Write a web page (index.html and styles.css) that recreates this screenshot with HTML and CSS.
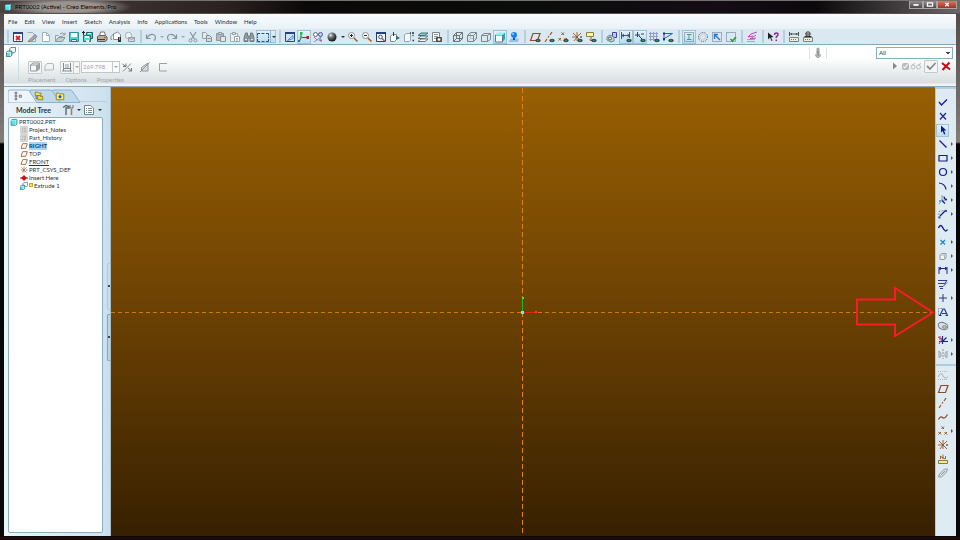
FILE: index.html
```html
<!DOCTYPE html>
<html lang="en">
<head>
<meta charset="utf-8">
<title>PRT0002 (Active) - Creo Elements/Pro</title>
<link rel="stylesheet" href="styles.css">
</head>
<body>
<svg class="defs" aria-hidden="true">
  <defs>
    <radialGradient id="ball" cx=".35" cy=".3" r=".7"><stop offset="0" stop-color="#e8ecee"/><stop offset=".4" stop-color="#6c7276"/><stop offset="1" stop-color="#15181a"/></radialGradient>
  </defs>
  <g>
    <symbol id="eye" viewBox="0 0 12 12"><ellipse cx="9" cy="9.5" rx="2.700" ry="1.700" fill="#3d4245"/><circle cx="9" cy="9.5" r="1" fill="#1f9a86"/></symbol>
    <symbol id="part" viewBox="0 0 12 12"><path d="M1.500 4l2-2h7v7l-2 2h-7z" fill="#5fe0e4" stroke="#1d6f78"/><path d="M8.500 4v7M1.500 4h7l2-2" stroke="#b9ffff" fill="none"/></symbol>
    <symbol id="cube" viewBox="0 0 12 12"><path d="M1.500 4.500h6v6h-6zM4 2.500h6.500v6M1.500 4.500l2.500-2M7.500 4.500l3-2M7.500 10.500l3-2" fill="none" stroke="#7d878d"/></symbol>
    <symbol id="wire" viewBox="0 0 12 12"><path d="M1.500 4.500h6v6h-6zM4.500 1.500h6v6h-6zM1.500 4.500l3-3M7.500 4.500l3-3M7.500 10.500l3-3M1.500 10.500l3-3" fill="none" stroke="#6a747a"/></symbol>
    <symbol id="hidden" viewBox="0 0 12 12"><path d="M4.500 1.500v6h6M1.500 10.500l3-3" fill="none" stroke="#bcc4c8"/><path d="M1.500 4.500h6v6h-6zM4.500 1.500h6v6M1.500 4.500l3-3M7.500 4.500l3-3M7.500 10.500l3-3" fill="none" stroke="#7d878d"/></symbol>
    <symbol id="shaded" viewBox="0 0 12 12"><path d="M8.500 4l2.500-2.500v6.500l-2.500 3z" fill="#23a9b3"/><path d="M1.500 4h7v7h-7z" fill="#f4ffff" stroke="#5b7f88"/><path d="M1.500 4L4 1.500h7L8.500 4z" fill="#8beff2"/></symbol>
    <symbol id="closewin" viewBox="0 0 12 12"><path d="M1.500 1.500h9v9h-9z" fill="#fff" stroke="#2c437c"/><path d="M1 1h10v2H1z" fill="#2c437c"/><path d="M4 5l4 4M8 5l-4 4" stroke="#d2262b" stroke-width="1.800"/></symbol>
    <symbol id="editpage" viewBox="0 0 12 12"><path d="M1.500 1.500h5l3 3v6h-4" fill="#e2e7ea" stroke="#a0aab0"/><path d="M2 10.500l7-7 2 2-6 5z" fill="#a5adb2" stroke="#77828a"/></symbol>
    <symbol id="page" viewBox="0 0 12 12"><path d="M2.500 1.500h4l3 3v6h-7z" fill="#fff" stroke="#a3afb6"/><path d="M6.500 1.500v3h3" fill="none" stroke="#a3afb6"/></symbol>
    <symbol id="open" viewBox="0 0 12 12"><path d="M1.500 10.500v-6h3l1 1h3v2" fill="#e8edf0" stroke="#93a0a7"/><path d="M1.500 10.500l2.500-4h7l-2.500 4z" fill="#c4ccd0" stroke="#8c989e"/><path d="M6 3q3-2.500 4.500.5M11 1.500v2.500H8.500" fill="none" stroke="#8c989e"/></symbol>
    <symbol id="save" viewBox="0 0 12 12"><path d="M1.500 1.500h9v9h-9z" fill="#4fd6d5" stroke="#2f8f98"/><path d="M3 2h6v4H3z" fill="#f4ffff"/><path d="M3.500 8.500h5v2h-5z" fill="#e6f0f2" stroke="#567"/></symbol>
    <symbol id="copysave" viewBox="0 0 12 12"><path d="M4.500 1.500h6v6h-6z" fill="#42cfd0" stroke="#245c66"/><path d="M1.500 4.500h7v6h-7z" fill="#54dddb" stroke="#3d6670"/><path d="M3 5h4v2H3zM4 9h3v2H4zM6 2h3v1H6z" fill="#fff"/><path d="M0 1.500h3M1.500 0v4" stroke="#222"/></symbol>
    <symbol id="print" viewBox="0 0 12 12"><path d="M3.500 5l1-4h4l1 4" fill="#fff" stroke="#7c7168"/><path d="M1.500 5.500l2-1h6l1.500 1.500v3l-2 1.500H1.500z" fill="#bcae9c" stroke="#675d54"/><path d="M2 8.500h7" stroke="#413a35"/><path d="M8 6.500h1.500" stroke="#c43"/></symbol>
    <symbol id="preview" viewBox="0 0 12 12"><path d="M2 8.500H1v-3l3-3 4-.5 2 2" fill="#f2eee8" stroke="#8a8f93"/><path d="M3.500 3l4-2 3 2.500v5h-7z" fill="#fff" stroke="#8a8a88"/><path d="M8 6h3v5H8z" fill="#333"/><path d="M9 6h1v3H9z" fill="#d77c28"/></symbol>
    <symbol id="mail" viewBox="0 0 12 12"><circle cx="4.500" cy="4.500" r="3.200" fill="#eef2f4" stroke="#a4adb3"/><path d="M4.500 6.500h6v4h-6zM4.500 6.500l3 2 3-2" fill="#d2d8dc" stroke="#929da4"/></symbol>
    <symbol id="undo" viewBox="0 0 12 12"><path d="M1.500 3.500v4h4M2 7q2.500-4.500 6-3.500t2 5l-1 1" fill="none" stroke="#8793a0" stroke-width="1.200"/></symbol>
    <symbol id="redo" viewBox="0 0 12 12"><path d="M10.500 3.500v4h-4M10 7q-2.500-4.500-6-3.500t-2 5l1 1" fill="none" stroke="#8793a0" stroke-width="1.200"/></symbol>
    <symbol id="cut" viewBox="0 0 12 12"><path d="M3 1l4.500 7M9 1L4.500 8" stroke="#8a969d" stroke-width="1.200"/><circle cx="3.500" cy="9.500" r="1.500" fill="none" stroke="#8a969d"/><circle cx="8.500" cy="9.500" r="1.500" fill="none" stroke="#8a969d"/></symbol>
    <symbol id="copy" viewBox="0 0 12 12"><path d="M1.500 1.500h3l2 2v4h-5z" fill="#e6eaec" stroke="#96a0a7"/><path d="M5.500 4.500h3l2 2v4h-5z" fill="#d5dade" stroke="#838e95"/><path d="M6.500 7.500h3" stroke="#838e95"/></symbol>
    <symbol id="paste" viewBox="0 0 12 12"><path d="M1.500 2.500h7v7h-7z" fill="#b2babf" stroke="#8d979d"/><path d="M3.500 1.500h3v2h-3z" fill="#dfe3e5" stroke="#8d979d"/><path d="M5.500 5.500h5v5h-5z" fill="#e1e6e9" stroke="#87929a"/></symbol>
    <symbol id="pastesp" viewBox="0 0 12 12"><path d="M1.500 2.500h7v8h-7z" fill="#edf0f2" stroke="#a3adb4"/><path d="M3.500 1.500h3v2h-3z" fill="#dfe3e5" stroke="#98a2a9"/><path d="M5.500 5.500h5v5h-5zM7 7.500h2M7 9h2" fill="#fff" stroke="#98a2a9"/></symbol>
    <symbol id="find" viewBox="0 0 12 12"><path d="M2.500 2h2v3h3V2h2l1.500 5v3.500H7V7H5v3.500H1V7z" fill="#8f9ba2" stroke="#6f7a81"/><path d="M2 8.500h2M8 8.500h2" stroke="#dfe5e9"/></symbol>
    <symbol id="marquee" viewBox="0 0 12 12"><path d="M.5 4.500v-2H3M9 2.500h2.500v2M11.500 8v2.500H9M3 10.500H.5V8M4.500 2.500h3M4.500 10.500h3M.5 5.500v1.500M11.500 5.500v1.500" fill="none" stroke="#344d68"/></symbol>
    <symbol id="repaint" viewBox="0 0 12 12"><path d="M1.500 1.500h9v9h-9z" fill="#cfe4f5" stroke="#25467c"/><path d="M1 1h10v2H1z" fill="#25467c"/><path d="M3.500 9.500l5.500-5v3z" fill="#fff" stroke="#4b86b8"/></symbol>
    <symbol id="spin" viewBox="0 0 12 12"><path d="M3 2v4.500h6M3 6.500L1.500 10" fill="none" stroke="#4b5358"/><path d="M2 1h2.500v2.500H2z" fill="#1fb84a"/><path d="M8.500 5h2.500v3H8.500z" fill="#b5231f"/><circle cx="3" cy="6.500" r="1.300" fill="#35b74a"/><path d="M0 9h2v2H0z" fill="#2866d8"/></symbol>
    <symbol id="orient" viewBox="0 0 12 12"><circle cx="3.500" cy="3.500" r="2" fill="#fff" stroke="#666"/><circle cx="8.500" cy="3.500" r="2" fill="#c5cdf4" stroke="#4a5aa0"/><path d="M2 6l3 3 4-3M5 9l-3 2M9 6l-2 4" fill="none" stroke="#7b8ac2"/><path d="M8 8.500h2v2H8z" fill="#aa63a5"/></symbol>
    <symbol id="sphere" viewBox="0 0 12 12"><circle cx="6" cy="6" r="4.500" fill="url(#ball)"/></symbol>
    <symbol id="zoomin" viewBox="0 0 12 12"><circle cx="4.500" cy="4.500" r="3" fill="#fff" stroke="#8a9093"/><path d="M3 4.500h3M4.500 3v3" stroke="#222"/><path d="M7 7l3.500 3.500" stroke="#985b32" stroke-width="1.500"/></symbol>
    <symbol id="zoomout" viewBox="0 0 12 12"><circle cx="4.500" cy="4.500" r="3" fill="#fff" stroke="#8a9093"/><path d="M3 4.500h3" stroke="#333"/><path d="M7 7l3.500 3.500" stroke="#985b32" stroke-width="1.500"/></symbol>
    <symbol id="refit" viewBox="0 0 12 12"><path d="M1.500 1.500h9v9h-9z" fill="#e9f4fb" stroke="#263f7c"/><path d="M1 1h10v2H1z" fill="#263f7c"/><circle cx="5.500" cy="6" r="1.800" fill="#fff" stroke="#555"/><path d="M7 7.500l2.500 2.500" stroke="#985b32" stroke-width="1.300"/></symbol>
    <symbol id="reorient" viewBox="0 0 12 12"><path d="M1.500 5l2-1.500h4v5l-2 2h-4z" fill="#f4ffff" stroke="#7c8a90"/><path d="M7 4.500l4 2.500-4 2z" fill="#2b7073"/><path d="M4.500 1v4" stroke="#2b3a3c"/></symbol>
    <symbol id="views" viewBox="0 0 12 12"><path d="M1.500 4l1.500-1.500h4.500v6.500l-1 1.500h-5z" fill="#f6fbfd" stroke="#98a5ab"/><path d="M7 2h1M9 2h2M9.500 4.500h1M9.500 9.500h1.500" stroke="#1d3337" stroke-width="1.500"/></symbol>
    <symbol id="layers" viewBox="0 0 12 12"><path d="M1 10.500L4 8h7l-3 2.500z" fill="#fff" stroke="#65757b"/><path d="M1 7.500L4 5h7L8 7.500z" fill="#dff2ef" stroke="#65757b"/><path d="M1 4.500L4 2h7L8 4.500z" fill="#74d3cc" stroke="#4e7377"/></symbol>
    <symbol id="viewmgr" viewBox="0 0 12 12"><path d="M1.500 1.500h7v9h-7z" fill="#fff" stroke="#7c8589"/><path d="M3 3.500h4M3 5.500h4M3 7.500h2" stroke="#8a9397"/><path d="M5.500 6.500h5v4h-5z" fill="#706a60" stroke="#4d4943"/><circle cx="8" cy="8.500" r="1.200" fill="#fff"/></symbol>
    <symbol id="enh" viewBox="0 0 12 12"><path d="M1 10l2-2.500h8L10 11H1z" fill="#8ac4ee"/><circle cx="6" cy="4" r="3" fill="#1780ef"/><circle cx="5" cy="3" r="1" fill="#9fd0ff"/><path d="M5 7h2v2H5z" fill="#1455a5"/></symbol>
    <symbol id="plane" viewBox="0 0 12 12"><path d="M1.500 9.500L4 2.500h7L8.500 9.500z" fill="none" stroke="#8a4c22" stroke-width="1.200"/></symbol>
    <symbol id="axis" viewBox="0 0 12 12"><path d="M2 11l2-3M5 6.500l1-1.500M7 4l2-3" stroke="#9b531f" stroke-width="1.200"/></symbol>
    <symbol id="points" viewBox="0 0 12 12"><path d="M4.500 1.500L7 4M7 1.500L4.500 4M1.500 7L4 9.500M4 7L1.500 9.500M7.500 7L10 9.500M10 7L7.500 9.500" stroke="#9b531f"/></symbol>
    <symbol id="csys" viewBox="0 0 12 12"><path d="M6 6L2 2M6 6l4-4M6 6H1M6 6l-3 4M6 1v9M6 6l4 4" stroke="#985222" stroke-width=".9"/><path d="M9 6h2" stroke="#222"/></symbol>
    <symbol id="note" viewBox="0 0 12 12"><path d="M1.500 1.500h7v4h-7z" fill="#fff6a0" stroke="#888044"/><path d="M6 6v4M4.500 8.500L6 10l1.500-1.500" fill="none" stroke="#8a5a3a"/></symbol>
    <symbol id="setup" viewBox="0 0 12 12"><path d="M6.500 1.500h4v5h-4z" fill="#c4c9f8" stroke="#3f43a8"/><path d="M1 6l3-2 4 2v4l-3 1-4-2z" fill="#b8dedb" stroke="#768589"/><circle cx="4" cy="7.500" r="1.500" fill="#eee" stroke="#555"/></symbol>
    <symbol id="dim" viewBox="0 0 12 12"><path d="M1.500 1v7M9.500 1v6M2 4.500h7M4 3L2 4.500 4 6M7.500 3l2 1.500-2 1.500" fill="none" stroke="#3a4468" stroke-width=".9"/></symbol>
    <symbol id="constr" viewBox="0 0 12 12"><path d="M3.500 1v5M1 4h5M5 5l4 4" stroke="#1e3aa4"/><path d="M7 3h3" stroke="#444"/></symbol>
    <symbol id="grid" viewBox="0 0 12 12"><path d="M2.500 1v9M5.500 1v9M8.500 1v9M1 2.500h9M1 5.500h9M1 8.500h9" stroke="#949ccb"/></symbol>
    <symbol id="vertex" viewBox="0 0 12 12"><path d="M2 10V2.500h8.500L2.500 7.500" fill="none" stroke="#2761bd"/><path d="M1 1.500h2v2H1zM1 7h2v2H1z" fill="#19337b"/></symbol>
    <symbol id="dots" viewBox="0 0 12 12"><path d="M1.500 1.500h9v9h-9z" fill="none" stroke="#5a7187" stroke-dasharray="1 1"/></symbol>
    <symbol id="shadeloop" viewBox="0 0 12 12"><use href="#dots"/><path d="M4 3.500h4.500M6 3.500v5M4 8.500h4.500" stroke="#55977e"/></symbol>
    <symbol id="openends" viewBox="0 0 12 12"><circle cx="6" cy="6" r="4.500" fill="none" stroke="#46565f" stroke-dasharray="1 1"/><path d="M6 2.500L9.500 6 6 9.500 2.500 6z" fill="none" stroke="#c0ccd4"/></symbol>
    <symbol id="overlap" viewBox="0 0 12 12"><use href="#dots"/><path d="M3 3l6 6M3.500 8V3.500H7" fill="none" stroke="#2679da" stroke-width="1.400"/></symbol>
    <symbol id="feature" viewBox="0 0 12 12"><use href="#dots"/><path d="M5.500 8l2 2 3.500-4" fill="none" stroke="#20a23a" stroke-width="1.600"/></symbol>
    <symbol id="resume" viewBox="0 0 12 12"><path d="M1 10.500h8M1 8.500h8" stroke="#a6acb4"/><path d="M11 1L5 3 2 6l5-1M10 4L4 8l6-1" fill="none" stroke="#b44bb8"/></symbol>
    <symbol id="help" viewBox="0 0 12 12"><path d="M1 1.500v7l2-2 1.500 3.500 1-.5-1.500-3 2.500-.5z" fill="#222"/><path d="M7.500 4q0-2 1.800-2t1.700 1.500q0 1.300-1.700 2.300v1.200M9.300 8.500v1.500" fill="none" stroke="#8b2495" stroke-width="1.500"/></symbol>
    <symbol id="ruler" viewBox="0 0 12 12"><path d="M1.500 6.500h9v4h-9z" fill="#f1efdc" stroke="#7b8084"/><path d="M3 8.500h6" stroke="#777" stroke-dasharray="1 1"/><path d="M1.500 1v4M10.500 1v4M2 3h8M4 2L3 3l1 1M8 2l1 1-1 1" fill="none" stroke="#484e52"/></symbol>
    <symbol id="scale" viewBox="0 0 12 12"><path d="M1.500 6.500h9v4h-9z" fill="#f1efdc" stroke="#7b8084"/><path d="M3 8.500h6" stroke="#777" stroke-dasharray="1 1"/><circle cx="6" cy="3" r="2.200" fill="#ddd" stroke="#333"/><path d="M2.500 5.500h7M4 3h4" stroke="#333"/></symbol>
    <symbol id="extrude" viewBox="0 0 12 12"><path d="M4.500 2l1.500-1.500h5.500v5L10 7H4.500z" fill="#eefafa" stroke="#47646c"/><path d="M.5 6.500L2 5h5v5l-1.500 1.500h-5z" fill="#6bdbdc" stroke="#2b6972"/><path d="M1 6.500h4.500V11" fill="none" stroke="#e7ffff"/></symbol>
    <symbol id="solid" viewBox="0 0 12 12"><path d="M1.500 4h6v6h-6zM1.500 4L4 2h6.500v6l-3 2" fill="#f5f6f6" stroke="#92989b"/><path d="M7.500 4l3-2v6l-3 2z" fill="#a0a6a9"/></symbol>
    <symbol id="surface" viewBox="0 0 12 12"><path d="M2 10V5l2-2.500h5q1.500 0 1.500 1.500v5M2 10l1.500-1H10" fill="none" stroke="#b2b7ba"/></symbol>
    <symbol id="depth" viewBox="0 0 12 12"><path d="M1 10h10M2.500 2v8M9.500 2v8M2.500 7.500h7" fill="none" stroke="#858c90"/><path d="M4 3h4v4H4z" fill="#c6cbce"/></symbol>
    <symbol id="flip" viewBox="0 0 12 12"><path d="M2 10.500l8-8" stroke="#858c90"/><path d="M1.500 3l3.500 2.500M5 2.500v3H2M7 7l3.500 3M10.500 7v3h-3" fill="none" stroke="#757c80"/></symbol>
    <symbol id="cutmat" viewBox="0 0 12 12"><path d="M2.500 10V6.500L9 2v8z" fill="#d7dbdd" stroke="#8e9599"/><path d="M1 11L10.500 1.500" stroke="#8e9599"/></symbol>
    <symbol id="thick" viewBox="0 0 12 12"><path d="M10 2.500H2.500v7.500H10" fill="none" stroke="#9aa1a5"/></symbol>
    <symbol id="thermo" viewBox="0 0 12 12"><path d="M5 1.500q1-1 2 0v5q2 1 1 3-2 2-4 0-1-2 1-3z" fill="#c5c9cb" stroke="#8f9598"/><path d="M6 4v5" stroke="#777"/></symbol>
    <symbol id="play" viewBox="0 0 12 12"><path d="M4 2.500L8 6l-4 3.500z" fill="#858b8e"/></symbol>
    <symbol id="glasses" viewBox="0 0 12 12"><circle cx="3" cy="7" r="2" fill="none" stroke="#b9bfc1"/><circle cx="8.500" cy="7" r="2" fill="none" stroke="#b9bfc1"/><path d="M2 5l3-1.500M8 5l3-1.500" stroke="#b9bfc1"/></symbol>
    <symbol id="okgrey" viewBox="0 0 12 12"><path d="M2 6l3 3 5.500-6" fill="none" stroke="#858b8e" stroke-width="1.800"/></symbol>
    <symbol id="redx" viewBox="0 0 12 12"><path d="M2 3l8 6.500M9.500 2.500L2.500 10" stroke="#c80b12" stroke-width="2"/></symbol>
    <symbol id="ok" viewBox="0 0 12 12"><path d="M2 6l2.500 3L10 3.500" fill="none" stroke="#15238f" stroke-width="1.400"/></symbol>
    <symbol id="cancel" viewBox="0 0 12 12"><path d="M3 3l6 6.500M9 3L3 9.500" stroke="#15238f" stroke-width="1.200"/></symbol>
    <symbol id="pointer" viewBox="0 0 12 12"><path d="M4 1.500v7l1.700-1.500L7 10.500l1.300-.6L7 6.500h2.500z" fill="#10188a"/></symbol>
    <symbol id="line" viewBox="0 0 12 12"><path d="M2.500 2.500l7 7" stroke="#151c8b" stroke-width="1.300"/></symbol>
    <symbol id="rect" viewBox="0 0 12 12"><path d="M2 3.500h8v5.500H2z" fill="none" stroke="#151c8b" stroke-width="1.200"/></symbol>
    <symbol id="circle" viewBox="0 0 12 12"><circle cx="6" cy="6" r="3.500" fill="none" stroke="#151c8b" stroke-width="1.200"/></symbol>
    <symbol id="arc" viewBox="0 0 12 12"><path d="M2 3q6 .5 7 6.500" fill="none" stroke="#151c8b" stroke-width="1.200"/></symbol>
    <symbol id="fillet" viewBox="0 0 12 12"><path d="M5 1v5l5 .5M5 6l-3 4" fill="none" stroke="#9097a0"/><path d="M7 2.500q0 3 3 3M5 6.500l3 3" fill="none" stroke="#151c8b" stroke-width="1.200"/><path d="M2 6h2v2H2z" fill="#4bbac1"/></symbol>
    <symbol id="chamfer" viewBox="0 0 12 12"><path d="M2 10V3.500L10 2" fill="none" stroke="#8592a6" stroke-dasharray="2 1"/><path d="M3 8l5-5" stroke="#151c8b" stroke-width="1.200"/><path d="M1.500 8.500h2v2h-2zM8 2h2v2H8z" fill="#2d58bd"/></symbol>
    <symbol id="spline" viewBox="0 0 12 12"><path d="M1.500 6q2-5 4.500 0t4.500 1.500" fill="none" stroke="#151c8b" stroke-width="1.400"/></symbol>
    <symbol id="point" viewBox="0 0 12 12"><path d="M3.500 4l4.500 4.500M8 4L3.500 8.500" stroke="#1583d6" stroke-width="1.200"/></symbol>
    <symbol id="edge" viewBox="0 0 12 12"><path d="M3 5l1.500-1.500H9V8L7.500 9.500H3z" fill="#f2f3f3" stroke="#969ca1"/><path d="M3 5h4.500v4.500M7.500 5L9 3.500" fill="none" stroke="#b0b5b9"/></symbol>
    <symbol id="dimension" viewBox="0 0 12 12"><path d="M2 3v7M10 3v7M2 4.500h8M4 3L2 4.500 4 6M8 3l2 1.500L8 6" fill="none" stroke="#20298b"/></symbol>
    <symbol id="modify" viewBox="0 0 12 12"><path d="M1 2.500h9L7 6M1 5.500h6M2 8.500h4l4-4M3 10.500h3" fill="none" stroke="#303b91"/></symbol>
    <symbol id="cross" viewBox="0 0 12 12"><path d="M2 6h8M6 2v8" stroke="#30367a"/></symbol>
    <symbol id="textA" viewBox="0 0 12 12"><path d="M1.500 9.500v-7h4" fill="none" stroke="#8490a8" stroke-dasharray="2 1"/><path d="M3 9.500L6 3h1.500l3 6.500M5 7.500h4M2 9.500h2.500M8.500 9.500H11" fill="none" stroke="#293987" stroke-width="1.200"/></symbol>
    <symbol id="palette" viewBox="0 0 12 12"><ellipse cx="6" cy="6" rx="5" ry="3.400" transform="rotate(22 6 6)" fill="#dbe0d8" stroke="#67719a"/><ellipse cx="7.500" cy="7" rx="1.900" ry="1.300" fill="#d5d5a8" stroke="#86876f"/></symbol>
    <symbol id="trim" viewBox="0 0 12 12"><path d="M5.500 2v8M2 7.500h9M5.500 7.500l4-4" stroke="#1b2792" stroke-width="1.200"/><path d="M1 3l4 2-3 5M3 2v4" fill="none" stroke="#b43a36"/></symbol>
    <symbol id="mirror" viewBox="0 0 12 12"><path d="M6 1v10" stroke="#87939a" stroke-dasharray="2 1"/><path d="M2 9.500V3l2 2.500v3zM10 9.500V3L8 5.500v3z" fill="#d5dbdf" stroke="#9ba4a9"/></symbol>
    <symbol id="ghost" viewBox="0 0 12 12"><path d="M1 2.500h10M1 10.500h10" stroke="#b0b9be" stroke-dasharray="1 1"/><path d="M1 8q3-6 5-1.500t5 1" fill="none" stroke="#a8b1b7"/></symbol>
    <symbol id="curve" viewBox="0 0 12 12"><path d="M1.500 8.500q2-4 4-2t5-3" fill="none" stroke="#8c4725" stroke-width="1.200"/></symbol>
    <symbol id="analysis" viewBox="0 0 12 12"><path d="M1.500 7.500h9v3h-9z" fill="#fbe98f" stroke="#8b7c38"/><path d="M3.500 6V3M6 6V1.500M8.500 6V3M3 3l5 3" fill="none" stroke="#a1532b" stroke-width=".9"/></symbol>
    <symbol id="link" viewBox="0 0 12 12"><path d="M1.500 10l1-3 5-5h3l-1 3-5 5zM4 8l4-4" fill="#d9dfe2" stroke="#929ba0"/></symbol>
    <symbol id="treeicon" viewBox="0 0 12 12"><path d="M2.500 1.500h2v2h-2zM2.500 5h2v2h-2zM2.500 8.500h2v2h-2zM7.500 5h2.500v2.500H7.500z" fill="#fff" stroke="#555d62"/></symbol>
    <symbol id="folders" viewBox="0 0 12 12"><path d="M1.500 1.500h3l1 1h3v3h-7z" fill="#f6e263" stroke="#807724"/><path d="M4.500 5.500h2l1 1h3v4h-6z" fill="#f3d94c" stroke="#807724"/><path d="M2.500 6v3H4" fill="none" stroke="#555"/></symbol>
    <symbol id="favorite" viewBox="0 0 12 12"><path d="M1.500 2.500h3l1 1h5v7h-9z" fill="#f7e966" stroke="#877c2a"/><path d="M6 4.500l2 2.500-2 2-2-2z" fill="#1c4dbd"/></symbol>
    <symbol id="tools" viewBox="0 0 12 12"><path d="M1 3.500l3-2 3 1v1.500H4v7" fill="none" stroke="#5d686e" stroke-width="1.400"/><path d="M9.500 5v6" stroke="#b27842" stroke-width="1.500"/><path d="M8 1v3h3V1" fill="none" stroke="#647076"/></symbol>
    <symbol id="list" viewBox="0 0 12 12"><path d="M1.500 1.500h6l3 2.500v6.500h-9z" fill="#fff" stroke="#76848b"/><path d="M3 4.500h1M3 6.500h1M3 8.500h1M5 4.500h4M5 6.500h4M5 8.500h4" stroke="#78858b"/></symbol>
    <symbol id="notes" viewBox="0 0 12 12"><path d="M1 1h10v10H1z" fill="#dcdedb" stroke="#b7bbb8"/><path d="M3 3.500h2M6 3.500h3M3 6h2M6 6h3M3 8.500h2M6 8.500h3" stroke="#979c98"/></symbol>
    <symbol id="insert" viewBox="0 0 12 12"><path d="M6 1.500L10.500 6 6 10.500 1.500 6z" fill="#cb1019"/><path d="M0 6h12" stroke="#cb1019" stroke-width="1.500"/></symbol>
  </g>
</svg>

<div class="window">
  <header class="titlebar">
    <svg class="app-icon"><use href="#part"/></svg>
    <h1 class="title">PRT0002 (Active) - Creo Elements/Pro</h1>
    <div class="window-buttons">
      <button class="wb" aria-label="Minimize"><svg viewBox="0 0 14 8"><path d="M4 4.500h6" stroke="#fff" stroke-width="2"/></svg></button>
      <button class="wb" aria-label="Maximize"><svg viewBox="0 0 14 8"><path d="M4 2h6v4H4z" fill="none" stroke="#fff" stroke-width="1.500"/></svg></button>
      <button class="wb wb-close" aria-label="Close"><svg viewBox="0 0 14 8"><path d="M5 2l4 4M9 2L5 6" stroke="#fff" stroke-width="1.500"/></svg></button>
    </div>
  </header>

  <div class="client">
    <nav class="menubar">
      <button>File</button><button>Edit</button><button>View</button><button>Insert</button><button>Sketch</button><button>Analysis</button><button>Info</button><button>Applications</button><button>Tools</button><button>Window</button><button>Help</button>
    </nav>

    <div class="toolbar" role="toolbar" aria-label="Main toolbar">
      <span class="sep"></span>
      <button class="tool" aria-label="Close window"><svg><use href="#closewin"/></svg></button>
      <button class="tool" aria-label="Edit"><svg><use href="#editpage"/></svg></button>
      <button class="tool" aria-label="New"><svg><use href="#page"/></svg></button>
      <button class="tool" aria-label="Open"><svg><use href="#open"/></svg></button>
      <button class="tool" aria-label="Save"><svg><use href="#save"/></svg></button>
      <button class="tool" aria-label="Save a copy"><svg><use href="#copysave"/></svg></button>
      <button class="tool" aria-label="Print"><svg><use href="#print"/></svg></button>
      <button class="tool" aria-label="Send"><svg><use href="#preview"/></svg></button>
      <button class="tool" aria-label="Mail link"><svg><use href="#mail"/></svg></button>
      <span class="sep"></span>
      <button class="tool" aria-label="Undo"><svg><use href="#undo"/></svg></button>
      <button class="drop dim" aria-label="Undo list"></button>
      <button class="tool" aria-label="Redo"><svg><use href="#redo"/></svg></button>
      <button class="drop dim" aria-label="Redo list"></button>
      <button class="tool" aria-label="Cut"><svg><use href="#cut"/></svg></button>
      <button class="tool" aria-label="Copy"><svg><use href="#copy"/></svg></button>
      <button class="tool" aria-label="Paste"><svg><use href="#paste"/></svg></button>
      <button class="tool" aria-label="Paste special"><svg><use href="#pastesp"/></svg></button>
      <button class="tool" aria-label="Find"><svg><use href="#find"/></svg></button>
      <span class="split on">
        <button class="tool" aria-label="Select inside box"><svg><use href="#marquee"/></svg></button>
        <button class="drop" aria-label="Selection modes"></button>
      </span>
      <span class="sep"></span>
      <button class="tool" aria-label="Repaint"><svg><use href="#repaint"/></svg></button>
      <button class="tool on" aria-label="Spin center"><svg><use href="#spin"/></svg></button>
      <button class="tool" aria-label="Orient mode"><svg><use href="#orient"/></svg></button>
      <button class="tool" aria-label="Appearance"><svg><use href="#sphere"/></svg></button>
      <button class="drop" aria-label="Appearances"></button>
      <button class="tool" aria-label="Zoom in"><svg><use href="#zoomin"/></svg></button>
      <button class="tool" aria-label="Zoom out"><svg><use href="#zoomout"/></svg></button>
      <button class="tool" aria-label="Refit"><svg><use href="#refit"/></svg></button>
      <button class="tool" aria-label="Reorient"><svg><use href="#reorient"/></svg></button>
      <button class="tool" aria-label="Saved views"><svg><use href="#views"/></svg></button>
      <button class="tool" aria-label="Layers"><svg><use href="#layers"/></svg></button>
      <button class="tool" aria-label="View manager"><svg><use href="#viewmgr"/></svg></button>
      <span class="sep"></span>
      <button class="tool" aria-label="Wireframe"><svg><use href="#wire"/></svg></button>
      <button class="tool" aria-label="Hidden line"><svg><use href="#hidden"/></svg></button>
      <button class="tool" aria-label="No hidden"><svg><use href="#cube"/></svg></button>
      <button class="tool on" aria-label="Shading"><svg><use href="#shaded"/></svg></button>
      <button class="tool" aria-label="Enhanced realism"><svg><use href="#enh"/></svg></button>
      <span class="sep"></span>
      <button class="tool" aria-label="Plane display"><svg><use href="#plane"/><use href="#eye"/></svg></button>
      <button class="tool" aria-label="Axis display"><svg><use href="#axis"/><use href="#eye"/></svg></button>
      <button class="tool" aria-label="Point display"><svg><use href="#points"/><use href="#eye"/></svg></button>
      <button class="tool" aria-label="Csys display"><svg><use href="#csys"/><use href="#eye"/></svg></button>
      <button class="tool" aria-label="Annotation display"><svg><use href="#note"/><use href="#eye"/></svg></button>
      <span class="sep"></span>
      <button class="tool" aria-label="Sketch orientation"><svg><use href="#setup"/></svg></button>
      <button class="tool on" aria-label="Show dimensions"><svg><use href="#dim"/><use href="#eye"/></svg></button>
      <button class="tool on" aria-label="Show constraints"><svg><use href="#constr"/><use href="#eye"/></svg></button>
      <button class="tool" aria-label="Show grid"><svg><use href="#grid"/><use href="#eye"/></svg></button>
      <button class="tool" aria-label="Show vertices"><svg><use href="#vertex"/><use href="#eye"/></svg></button>
      <span class="sep"></span>
      <button class="tool on" aria-label="Shade closed loops"><svg><use href="#shadeloop"/></svg></button>
      <button class="tool" aria-label="Highlight open ends"><svg><use href="#openends"/></svg></button>
      <button class="tool" aria-label="Overlapping geometry"><svg><use href="#overlap"/></svg></button>
      <button class="tool" aria-label="Feature requirements"><svg><use href="#feature"/></svg></button>
      <span class="sep"></span>
      <button class="tool" aria-label="Datum references"><svg><use href="#resume"/></svg></button>
      <span class="sep"></span>
      <button class="tool" aria-label="Context help"><svg><use href="#help"/></svg></button>
      <span class="sep"></span>
      <button class="tool" aria-label="Measure distance"><svg><use href="#ruler"/></svg></button>
      <button class="tool" aria-label="Mass properties"><svg><use href="#scale"/></svg></button>
    </div>

    <section class="dashboard">
      <div class="feature-icon"><svg><use href="#extrude"/></svg></div>
      <div class="feature">
        <div class="feature-row">
          <div class="group">
            <button class="tool boxed" aria-label="Solid"><svg><use href="#solid"/></svg></button>
            <button class="tool" aria-label="Surface"><svg><use href="#surface"/></svg></button>
          </div>
          <div class="group">
            <span class="split boxed">
              <button class="tool" aria-label="Depth"><svg><use href="#depth"/></svg></button>
              <button class="drop dim" aria-label="Depth options"></button>
            </span>
            <span class="combo">
              <input type="text" value="269.798" aria-label="Depth value">
              <button class="drop dim" aria-label="Recent values"></button>
            </span>
            <button class="tool" aria-label="Flip direction"><svg><use href="#flip"/></svg></button>
          </div>
          <button class="tool" aria-label="Remove material"><svg><use href="#cutmat"/></svg></button>
          <button class="tool" aria-label="Thicken"><svg><use href="#thick"/></svg></button>
        </div>
        <div class="panel-tabs"><button>Placement</button><button>Options</button><button>Properties</button></div>
      </div>
      <div class="status">
        <div class="status-row">
          <span class="thermo"><svg><use href="#thermo"/></svg></span>
          <select class="filter" aria-label="Selection filter"><option>All</option></select>
        </div>
        <div class="confirm-row">
          <button class="tool" aria-label="Resume"><svg><use href="#play"/></svg></button>
          <input class="check" type="checkbox" checked aria-label="Preview">
          <button class="tool" aria-label="Verify"><svg><use href="#glasses"/></svg></button>
          <button class="tool boxed" aria-label="Apply"><svg><use href="#okgrey"/></svg></button>
          <button class="tool" aria-label="Cancel feature"><svg><use href="#redx"/></svg></button>
        </div>
      </div>
    </section>

    <main class="work">
      <aside class="navigator">
        <div class="tabs">
          <svg class="tab-shapes" viewBox="0 0 98 14" preserveAspectRatio="none" aria-hidden="true">
            <path d="M43 13.500V4q0-3 3-3h16q2 0 3 2l7 10.500z" fill="#bfd8ea" stroke="#8db2cb"/>
            <path d="M22 13.500V1h20q2 0 3 2l7 10.500z" fill="#bfd8ea" stroke="#8db2cb"/>
            <path d="M0 14V3q0-2 2-2h17q2 0 3 2l7 11z" fill="#eef5fa" stroke="#8db2cb"/>
          </svg>
          <button aria-label="Model tree"><svg><use href="#treeicon"/></svg></button>
          <button aria-label="Folder browser"><svg><use href="#folders"/></svg></button>
          <button aria-label="Favorites"><svg><use href="#favorite"/></svg></button>
        </div>
        <div class="tree-head">
          <h2>Model Tree</h2>
          <button class="tool" aria-label="Settings"><svg><use href="#tools"/></svg></button>
          <button class="drop" aria-label="Settings menu"></button>
          <button class="tool" aria-label="Show"><svg><use href="#list"/></svg></button>
          <button class="drop" aria-label="Show menu"></button>
        </div>
        <ul class="tree">
          <li class="root"><svg><use href="#part"/></svg><span>PRT0002.PRT</span></li>
          <li><svg><use href="#notes"/></svg><span>Project_Notes</span></li>
          <li><svg><use href="#notes"/></svg><span>Part_History</span></li>
          <li><svg><use href="#plane"/></svg><span class="picked">RIGHT</span></li>
          <li><svg><use href="#plane"/></svg><span>TOP</span></li>
          <li><svg><use href="#plane"/></svg><span class="under">FRONT</span></li>
          <li><svg><use href="#csys"/></svg><span>PRT_CSYS_DEF</span></li>
          <li><svg><use href="#insert"/></svg><span>Insert Here</span></li>
          <li><svg><use href="#extrude"/></svg><span><i class="new"></i>Extrude 1</span></li>
        </ul>
      </aside>
      <div class="splitter"><button aria-label="Collapse panel"></button><button class="pressed" aria-label="Expand panel"></button></div>

      <div class="canvas">
        <span class="ref-v"></span>
        <span class="ref-h"></span>
        <svg class="origin" viewBox="0 0 32 32"><path d="M16.500 2v14" stroke="#1fb52d"/><path d="M16 1h2v2h-2z" fill="#40e63c"/><path d="M16 16.500h14" stroke="#d02a18"/><path d="M29 15h2v2h-2z" fill="#f04428"/><path d="M15 15h3v3h-3z" fill="#6ff0d8"/></svg>
        <svg class="callout" viewBox="0 0 80 52"><path d="M2 13.500h38V2l38 24.500L40 50V38.500H2z" fill="none" stroke="#fb1a28" stroke-width="2"/></svg>
      </div>

      <div class="sketchbar" role="toolbar" aria-label="Sketcher tools">
        <div class="st"><button class="tool" aria-label="Done"><svg><use href="#ok"/></svg></button></div>
        <div class="st"><button class="tool" aria-label="Quit"><svg><use href="#cancel"/></svg></button></div>
        <div class="st"><button class="tool on" aria-label="Select"><svg><use href="#pointer"/></svg></button></div>
        <div class="st more"><button class="tool" aria-label="Line"><svg><use href="#line"/></svg></button></div>
        <div class="st more"><button class="tool" aria-label="Rectangle"><svg><use href="#rect"/></svg></button></div>
        <div class="st more"><button class="tool" aria-label="Circle"><svg><use href="#circle"/></svg></button></div>
        <div class="st more"><button class="tool" aria-label="Arc"><svg><use href="#arc"/></svg></button></div>
        <div class="st more"><button class="tool" aria-label="Fillet"><svg><use href="#fillet"/></svg></button></div>
        <div class="st more"><button class="tool" aria-label="Chamfer"><svg><use href="#chamfer"/></svg></button></div>
        <div class="st"><button class="tool" aria-label="Spline"><svg><use href="#spline"/></svg></button></div>
        <div class="st more"><button class="tool" aria-label="Point"><svg><use href="#point"/></svg></button></div>
        <div class="st more"><button class="tool" aria-label="Use edge"><svg><use href="#edge"/></svg></button></div>
        <div class="st more"><button class="tool" aria-label="Dimension"><svg><use href="#dimension"/></svg></button></div>
        <div class="st"><button class="tool" aria-label="Modify"><svg><use href="#modify"/></svg></button></div>
        <div class="st more"><button class="tool" aria-label="Constrain"><svg><use href="#cross"/></svg></button></div>
        <div class="st"><button class="tool" aria-label="Text"><svg><use href="#textA"/></svg></button></div>
        <div class="st"><button class="tool" aria-label="Palette"><svg><use href="#palette"/></svg></button></div>
        <div class="st more"><button class="tool" aria-label="Trim"><svg><use href="#trim"/></svg></button></div>
        <div class="st more"><button class="tool" aria-label="Mirror"><svg><use href="#mirror"/></svg></button></div>
        <span class="bar-line"></span>
        <div class="st"><button class="tool" aria-label="Sketch"><svg><use href="#ghost"/></svg></button></div>
        <div class="st"><button class="tool" aria-label="Datum plane"><svg><use href="#plane"/></svg></button></div>
        <div class="st"><button class="tool" aria-label="Datum axis"><svg><use href="#axis"/></svg></button></div>
        <div class="st"><button class="tool" aria-label="Datum curve"><svg><use href="#curve"/></svg></button></div>
        <div class="st more"><button class="tool" aria-label="Datum point"><svg><use href="#points"/></svg></button></div>
        <div class="st"><button class="tool" aria-label="Coordinate system"><svg><use href="#csys"/></svg></button></div>
        <div class="st"><button class="tool" aria-label="Analysis feature"><svg><use href="#analysis"/></svg></button></div>
        <div class="st"><button class="tool" aria-label="Reference"><svg><use href="#link"/></svg></button></div>
      </div>
    </main>
  </div>
</div>
</body>
</html>
```
FILE: styles.css
```css
* { box-sizing: border-box; }

body {
  margin: 0;
  font: 6px/8px Lato, "Open Sans", sans-serif;
  color: #2b3238;
}

button, input, select {
  margin: 0;
  padding: 0;
  border: 0;
  background: none;
  font: inherit;
  color: inherit;
}

h1, h2, ul { margin: 0; padding: 0; font: inherit; }
svg { display: block; flex: none; }
.defs { position: absolute; width: 0; height: 0; }

/* Window frame */
.window {
  display: flex;
  flex-direction: column;
  min-height: 100vh;
  padding: 0 4px 4px;
  background:
    linear-gradient(#1c0a0c, #1c0a0c) bottom / 100% 3px no-repeat,
    linear-gradient(#4c4645, #827d7b 142px, #050505 144px, #0a0808);
}

.titlebar {
  display: flex;
  align-items: center;
  height: 14px;
  margin: 0 -4px;
  padding-left: 4px;
  border-top: 1px solid #74716f;
  border-bottom: 1px solid #55504e;
  background:
    radial-gradient(ellipse 64px 10px at 68px 6px, #9a928e 50%, transparent),
    linear-gradient(90deg, #4c4341, #2a2020 24%, #0b0808 32%, #0a0d0a 55%, #140c16 75%, #0b090b 85%, #4a4648 95%, #6c6768);
}
.app-icon { width: 8px; height: 8px; }
.title { flex: 1; padding-left: 3px; color: #000; }
.window-buttons { display: flex; align-self: flex-start; margin-right: 3px; }
.wb {
  width: 14px;
  height: 8px;
  border: 1px solid #a9a5a5;
  border-top: 0;
  background: linear-gradient(#928e90, #4b4749);
}
.wb svg { width: 100%; height: 100%; }
.wb-close { width: 20px; background: linear-gradient(#d17b69, #ac2c1a); }

.client { display: flex; flex: 1; flex-direction: column; background: #dce9f2; }

/* Menus */
.menubar {
  display: flex;
  gap: 7px;
  height: 15px;
  padding: 1px 4px 0;
  background: linear-gradient(#f9fcfd, #e8f1f7);
}

/* Toolbar */
.toolbar {
  display: flex;
  align-items: center;
  height: 16px;
  border-bottom: 1px solid #82a9c1;
  background: #dae8f2;
}
.tool {
  display: flex;
  flex: none;
  align-items: center;
  justify-content: center;
  width: 14px;
  height: 14px;
}
.tool svg { width: 12px; height: 12px; }
.on { background: linear-gradient(#e6f3fb, #b5dcf4); box-shadow: inset 0 0 0 1px #a5c2d4; }
.sep { flex: none; width: 7px; height: 13px; background: linear-gradient(#b8cedc, #b8cedc) center / 2px 100% no-repeat; }
.drop {
  display: flex;
  flex: none;
  align-items: center;
  justify-content: center;
  width: 7px;
  height: 12px;
}
.drop::after { content: ""; border: 2px solid transparent; border-top-color: #2b3338; border-bottom: 0; }
.dim::after { border-top-color: #9fa8ad; }
.split { display: flex; flex: none; align-items: center; width: 20px; height: 13px; }
.split .drop { width: 6px; border-left: 1px solid #8fb5cd; }

/* Feature dashboard */
.dashboard {
  display: flex;
  height: 42px;
  border-bottom: 1px solid #8ba8b8;
  background: linear-gradient(#fff 12px, #f4f6f6 20px, #d7dfe2 38px, #f1f4f5 39px);
}
.feature-icon { width: 15px; margin: 2px 0 4px; border-right: 1px solid #cbdce6; }
.feature-icon svg { width: 10px; height: 10px; margin-left: 2px; }
.feature { flex: 1; padding: 15px 0 0 9px; color: #a1a7aa; }
.feature-row { display: flex; align-items: center; height: 14px; gap: 4px; }
.group { display: flex; align-items: center; }
.boxed { border: 1px solid #c3c8cb; border-radius: 1px; background: #f4f5f5; }
.boxed.tool { height: 13px; }
.boxed .drop { border-left-color: #c5cacc; }
.boxed .tool { width: 12px; }
.combo { display: flex; width: 39px; height: 12px; margin-left: 1px; border: 1px solid #c1c6c8; background: #fbfbfb; }
.combo input { width: 30px; padding-left: 1px; outline: 0; }
.combo .drop { height: 10px; border-left: 1px solid #c5cacc; }
.panel-tabs { display: flex; gap: 10px; height: 10px; padding-top: 2px; }
.status { padding: 2px 3px 0 0; }
.status-row { display: flex; align-items: flex-start; justify-content: flex-end; gap: 49px; }
.thermo { padding: 0 2px; border: solid #dfe4e6; border-width: 0 1px; }
.thermo svg { width: 12px; height: 12px; }
.filter {
  width: 77px;
  height: 12px;
  padding: 0 2px;
  border: 1px solid #86aebf;
  appearance: none;
  background:
    linear-gradient(#39434a, #39434a) right 2px top 4px / 4px 1px no-repeat,
    linear-gradient(#39434a, #39434a) right 3px top 5px / 2px 1px no-repeat,
    #fff;
}
.confirm-row { display: flex; align-items: center; justify-content: flex-end; height: 14px; }
.confirm-row .boxed { margin: 0 1px; }
.check { width: 7px; height: 7px; opacity: .4; filter: grayscale(1); }

/* Work area */
.work { display: flex; flex: 1; background: #cadfec; }
.navigator {
  display: flex;
  flex-direction: column;
  width: 102px;
  padding: 2px 3px 3px 4px;
  background: linear-gradient(90deg, #edf4f9, #cfe1ee);
}
.tabs { position: relative; display: flex; height: 13px; margin-right: -3px; border-bottom: 1px solid #b7cfdf; }
.tab-shapes { position: absolute; inset: 0; width: 98px; height: 14px; }
.tabs button { position: relative; width: 21px; padding: 2px 0 0 5px; }
.tabs button svg { width: 10px; height: 10px; }
.tree-head { display: flex; align-items: center; height: 15px; padding-left: 8px; }
.tree-head h2 { flex: 1; font-size: 7px; font-weight: 700; }
.tree {
  flex: 1;
  border: 1px solid #88aebf;
  border-radius: 2px;
  background: #fff;
  list-style: none;
}
.tree li { display: flex; align-items: center; gap: 1px; height: 8px; padding-left: 11px; white-space: nowrap; }
.tree .root { padding-left: 1px; }
.tree svg { width: 8px; height: 8px; }
.picked { background: #a9d4f5; font-weight: 700; color: #0c3f7c; }
.under { text-decoration: underline; }
.new { display: inline-block; width: 4px; height: 4px; margin-right: 1px; border: 1px solid #b5b33f; background: #f4e736; vertical-align: 1px; }

.splitter { display: flex; flex-direction: column; align-items: flex-end; justify-content: center; gap: 4px; width: 5px; background: #cadfec; border-right: 1px solid #a5bccb; }
.splitter button { display: flex; align-items: center; justify-content: flex-end; width: 3px; height: 47px; border: 1px solid #b2cbdb; border-right: 0; border-radius: 2px 0 0 2px; }
.splitter button::after { content: ""; width: 2px; height: 2px; background: #34495a; }
.splitter .pressed { background: #bdd5e5; border-color: #8ba3b3; }

/* Graphics area */
.canvas { position: relative; flex: 1; background: linear-gradient(#985f02, #6b4103 50%, #372000); border-top: 1px solid #a66808; }
.ref-v, .ref-h { position: absolute; }
.ref-v { left: calc(50% - 1px); top: 0; bottom: 0; width: 1px; background: repeating-linear-gradient(#d98313 0 5px, transparent 5px 8px); }
.ref-h { top: 50%; left: 0; right: 0; height: 1px; background: repeating-linear-gradient(90deg, #cc7a10 0 4px, transparent 4px 7px); }
.origin { position: absolute; left: calc(50% - 17px); top: calc(50% - 16px); width: 32px; height: 32px; }
.callout { position: absolute; right: 0; top: calc(50% - 26px); width: 80px; height: 52px; }

/* Sketcher toolbar */
.sketchbar { width: 21px; padding: 6px 0 0; border-left: 1px solid #b8c9d3; border-top: 2px solid #b5cddd; background: #dfebf3; }
.st { display: flex; align-items: center; height: 14px; }
.st .tool { width: 13px; height: 13px; }
.more::after { content: ""; margin-left: 2px; border: 2px solid transparent; border-left-color: #4e585f; border-right: 0; }
.bar-line { display: block; height: 7px; background: linear-gradient(#b2cbdc, #b2cbdc) center / 100% 2px no-repeat; }
```
